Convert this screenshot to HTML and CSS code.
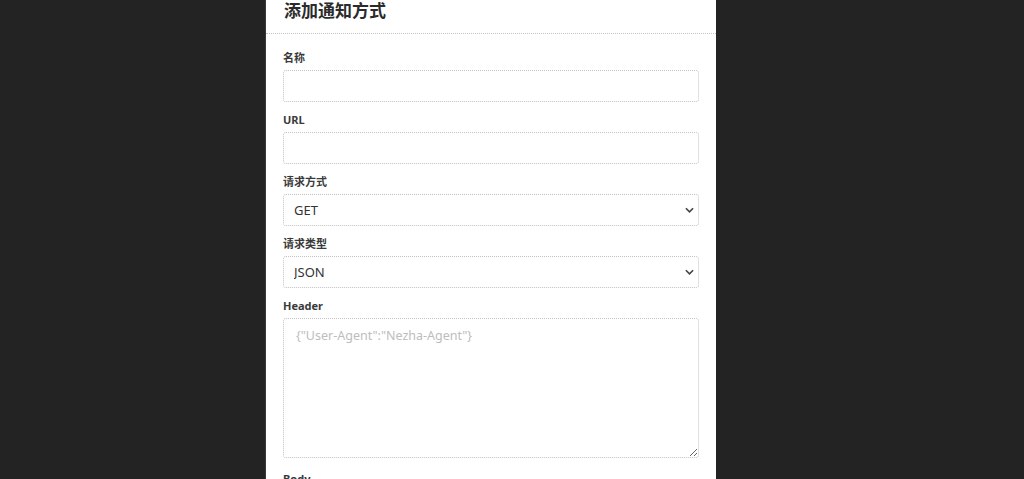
FILE: index.html
```html
<!DOCTYPE html>
<html lang="zh-CN">
<head>
<meta charset="utf-8">
<title>添加通知方式</title>
<link rel="stylesheet" href="styles.css">
</head>
<body>
<div class="stage">
  <div class="modal">
    <div class="modal-header">添加通知方式</div>
    <form class="modal-body">
      <div class="field">
        <label class="label">名称</label>
        <input class="control" type="text">
      </div>
      <div class="field">
        <label class="label">URL</label>
        <input class="control" type="text">
      </div>
      <div class="field">
        <label class="label">请求方式</label>
        <select class="control select">
          <option>GET</option>
          <option>POST</option>
        </select>
      </div>
      <div class="field">
        <label class="label">请求类型</label>
        <select class="control select">
          <option>JSON</option>
          <option>FORM</option>
        </select>
      </div>
      <div class="field field-area">
        <label class="label">Header</label>
        <textarea class="control area" placeholder='{"User-Agent":"Nezha-Agent"}'></textarea>
      </div>
      <div class="field">
        <label class="label">Body</label>
        <textarea class="control area"></textarea>
      </div>
    </form>
  </div>
</div>
</body>
</html>
```

FILE: styles.css
```css
* { box-sizing: border-box; }
html, body {
  margin: 0;
  height: 100%;
  overflow: hidden;
  background: #232323;
}
body {
  font-family: "Segoe UI", "Noto Sans", "Noto Sans CJK SC", sans-serif;
  color: #333;
}
.stage {
  padding-left: 265px;
  height: 100%;
}
.modal {
  width: 451px;
  min-height: 100%;
  background: #fff;
  border-left: 1px solid #3a3a3a;
}
.modal-header {
  height: 34px;
  padding: 0 18px;
  font-size: 17px;
  line-height: 20px;
  font-weight: 700;
  color: #2b2b2b;
  border-bottom: 1px dotted #c4c4c4;
  font-family: "Noto Sans CJK SC", sans-serif;
}
.modal-body {
  padding: 17px 17px 0 17px;
  margin: 0;
}
.field {
  display: flex;
  flex-direction: column;
  margin-bottom: 11px;
}
.field-area { margin-bottom: 14px; }
.label {
  font-size: 11px;
  line-height: 14px;
  font-weight: 700;
  color: #3a3a3a;
  margin-bottom: 5px;
  font-family: "Noto Sans", "Noto Sans CJK SC", sans-serif;
}
.control {
  width: 416px;
  height: 32px;
  border: 1px dotted #c2c2c2;
  border-radius: 3px;
  background: #fff;
  font-family: "Noto Sans", "Noto Sans CJK SC", sans-serif;
  font-size: 13px;
  color: #333;
  padding: 0 10px;
  outline: none;
  margin: 0;
}
.select {
  appearance: none;
  -webkit-appearance: none;
  background-image: url("data:image/svg+xml,%3Csvg xmlns='http://www.w3.org/2000/svg' width='10' height='6' viewBox='0 0 10 6'%3E%3Cpath d='M1 1l4 4 4-4' fill='none' stroke='%23444' stroke-width='1.8'/%3E%3C/svg%3E");
  background-repeat: no-repeat;
  background-position: right 4px center;
  background-size: 9px 6px;
}
.area {
  height: 140px;
  padding: 8px 12px;
  resize: vertical;
  display: block;
}
.area::placeholder {
  color: #bdbdbd;
  font-size: 12.5px;
}
```
